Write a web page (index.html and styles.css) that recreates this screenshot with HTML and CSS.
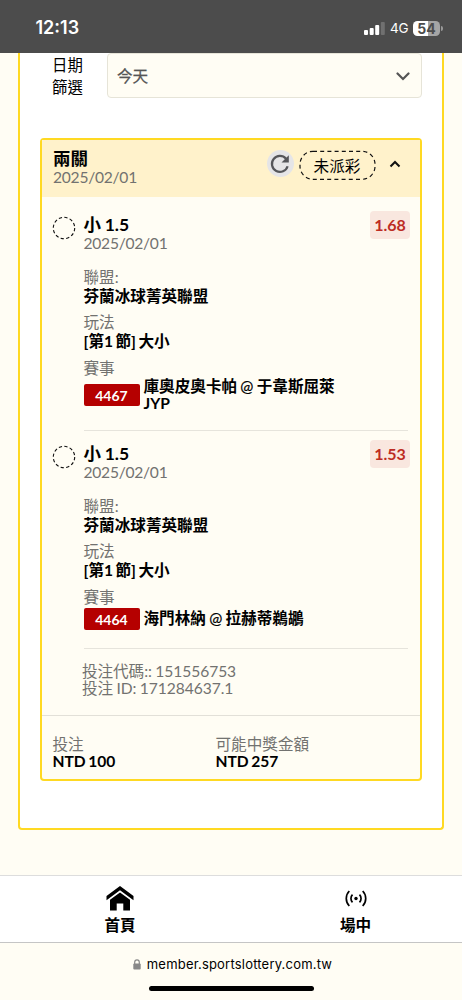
FILE: index.html
```html
<!DOCTYPE html>
<html lang="zh-Hant">
<head>
<meta charset="utf-8">
<title>投注紀錄</title>
<link rel="stylesheet" href="styles.css">
</head>
<body>
<div class="screen">
  <header class="status">
    <span class="clock">12:13</span>
    <div class="indicators">
      <svg class="signal" width="21" height="13" viewBox="0 0 21 13"><rect x="0" y="8" width="4" height="5" rx="1" fill="#fff"/><rect x="5.7" y="6" width="4" height="7" rx="1" fill="#fff"/><rect x="11.2" y="3" width="4" height="10" rx="1" fill="#fff"/><rect x="16.8" y="0" width="4" height="13" rx="1" fill="#707070"/></svg>
      <span class="network">4G</span>
      <div class="battery"><span class="level">54</span><i class="tip"></i></div>
    </div>
  </header>

  <main class="panel">
    <div class="filter">
      <div class="filter-label">日期<br>篩選</div>
      <div class="select"><span>今天</span>
        <svg width="14" height="9" viewBox="0 0 14 9"><path d="M1.5 1.5 7 7l5.500-5.500" fill="none" stroke="#555" stroke-width="2.200" stroke-linecap="round"/></svg>
      </div>
    </div>

    <section class="card">
      <div class="card-head">
        <div class="card-title"><div class="title">兩關</div><div class="date">2025/02/01</div></div>
        <div class="refresh"><svg width="20" height="20" viewBox="0 0 20 20"><path d="M16 4.700A8 8 0 1 0 17.600 12.200" fill="none" stroke="#55565a" stroke-width="2.200"/><path d="M18.800 1.200V8.500H11.500Z" fill="#55565a"/></svg></div>
        <div class="state"><svg class="state-ring" width="77" height="31" viewBox="0 0 77 31"><rect x="1" y="1.300" width="75" height="28" rx="13" fill="none" stroke="#111" stroke-width="1.200" stroke-dasharray="4 3.200"/></svg><span>未派彩</span></div>
        <svg class="caret" width="12" height="8" viewBox="0 0 12 8"><path d="M1.500 6.500 6 2l4.500 4.500" fill="none" stroke="#111" stroke-width="2"/></svg>
      </div>

      <article class="leg">
        <svg class="ring" width="24" height="24" viewBox="0 0 24 24"><circle cx="12" cy="12" r="10.700" fill="none" stroke="#111" stroke-width="1.100" stroke-dasharray="3.300 2.300"/></svg>
        <div class="leg-body">
          <div class="leg-top"><div><div class="title">小 1.5</div><div class="date">2025/02/01</div></div><span class="odds">1.68</span></div>
          <dl class="facts"><dt>聯盟:</dt><dd>芬蘭冰球菁英聯盟</dd><dt>玩法</dt><dd class="market">[第1 節] 大小</dd><dt>賽事</dt></dl>
          <div class="match tall"><span class="code">4467</span><span class="teams">庫奧皮奧卡帕 <i>@</i> 于韋斯屈萊<br>JYP</span></div>
        </div>
      </article>

      <article class="leg second">
        <svg class="ring" width="24" height="24" viewBox="0 0 24 24"><circle cx="12" cy="12" r="10.700" fill="none" stroke="#111" stroke-width="1.100" stroke-dasharray="3.300 2.300"/></svg>
        <div class="leg-body">
          <div class="leg-top"><div><div class="title">小 1.5</div><div class="date">2025/02/01</div></div><span class="odds">1.53</span></div>
          <dl class="facts"><dt>聯盟:</dt><dd>芬蘭冰球菁英聯盟</dd><dt>玩法</dt><dd class="market">[第1 節] 大小</dd><dt>賽事</dt></dl>
          <div class="match"><span class="code">4464</span><span class="teams">海門林納 <i>@</i> 拉赫蒂鵜鶘</span></div>
        </div>
      </article>

      <div class="ids"><div>投注代碼:: 151556753</div><div>投注 ID: 171284637.1</div></div>
      <div class="totals">
        <div class="stake"><div class="total-label">投注</div><div class="amount">NTD 100</div></div>
        <div><div class="total-label">可能中獎金額</div><div class="amount">NTD 257</div></div>
      </div>
    </section>
  </main>

  <nav class="tabs">
    <div class="tab home"><svg width="28" height="26" viewBox="0 0 28 26"><path d="M14 0 .500 10v4.200L14 4.200l13.500 10V10Z"/><path d="M14 6.500 4 13.700V24.500h6.700v-7h6.600v7H24V13.700Z"/></svg><span>首頁</span></div>
    <div class="tab live"><svg width="22" height="17" viewBox="0 0 22 17"><circle cx="11" cy="8.500" r="1.700"/><path d="M7.500 4.700a5.400 5.400 0 0 0 0 7.600M14.500 4.700a5.400 5.400 0 0 1 0 7.600M4.300 1a10.800 10.800 0 0 0 0 15M17.700 1a10.800 10.800 0 0 1 0 15" fill="none" stroke="#000" stroke-width="1.700"/></svg><span>場中</span></div>
  </nav>

  <footer class="browser">
    <div class="address"><svg width="8" height="11" viewBox="0 0 8 11"><path d="M1.700 5V3.200a2.300 2.300 0 0 1 4.600 0V5" fill="none" stroke="#888" stroke-width="1.200"/><rect x=".300" y="4.500" width="7.400" height="6" rx="1" fill="#888"/></svg><span>member.sportslottery.com.tw</span></div>
    <div class="grip"></div>
  </footer>
</div>
</body>
</html>
```
FILE: styles.css
```css
* { box-sizing: border-box; }
body { margin: 0; background: #fffdf4; color: #000; font: 15.6px/18px Lato, "Noto Sans CJK TC", sans-serif; }
.screen { width: 462px; height: 1000px; display: flex; flex-direction: column; overflow: hidden; }

.status { height: 53px; flex: none; background: #4c4c4c; color: #fff; display: flex; justify-content: space-between; align-items: flex-start; padding: 18px 19px 0 35.5px; font-family: Inter, sans-serif; }
.clock { font-size: 18px; line-height: 20px; font-weight: 600; letter-spacing: 0; }
.indicators { display: flex; align-items: center; padding-top: 2px; }
.signal { margin-right: 5px; }
.network { font-size: 13.5px; line-height: 16px; width: 19px; margin-right: 4px; letter-spacing: -.2px; }
.battery { display: flex; align-items: center; }
.level { width: 27px; height: 15px; border-radius: 4.5px; background: linear-gradient(90deg, #fff 54%, #a5a5a5 54%); color: #4c4c4c; font-size: 14px; line-height: 15px; font-weight: 700; text-align: center; }
.tip { width: 2px; height: 5px; margin-left: 1px; border-radius: 0 2px 2px 0; background: #999; }

.panel { flex: none; height: 777px; margin: 0 18px; border: 2px solid #ffd922; border-top: 0; border-radius: 0 0 4px 4px; background: #fff; padding: 0 20px; }
.filter { display: flex; height: 45px; }
.filter-label { width: 67px; padding: 1px 0 0 12px; font-size: 15.4px; line-height: 22px; }
.select { flex: 1; height: 45px; border: 1px solid #e6e4d8; border-radius: 4px; background: #fffdf4; color: #555; display: flex; align-items: center; justify-content: space-between; padding: 1px 11px 0 9px; -webkit-text-stroke: .25px #555; }

.card { height: 643px; margin-top: 40px; border: 2px solid #ffd922; border-radius: 4px; background: #fffdf4; }
.card-head { height: 57px; background: #fff2cb; display: flex; align-items: flex-start; padding: 10px 19px 0 11px; }
.card-title { flex: 1; }
.title { font-size: 17.5px; line-height: 18px; font-weight: 700; word-spacing: -.6px; }
.date { color: #727270; line-height: 18px; letter-spacing: -.25px; }
.refresh { width: 27px; height: 27px; border-radius: 50%; background: #e5e5e7; display: grid; place-items: center; margin-right: 5px; }
.state { display: grid; width: 77px; height: 31px; place-items: center; margin-right: 13.5px; }
.state > * { grid-area: 1 / 1; }
.caret { margin-top: 10px; }

.leg { display: flex; padding: 19px 10px 0 10.5px; height: 234px; }
.leg.second { height: 218px; padding-top: 14px; }
.ring { flex: none; margin: -.5px 8px 0 -1px; }
.leg-body { flex: 1; border-bottom: 1px solid #e6e4dc; margin-right: 2px; }
.leg-top { display: flex; justify-content: space-between; align-items: flex-start; height: 51.5px; margin-right: -2px; }
.odds { width: 40px; height: 28px; margin-top: -5px; border-radius: 4px; background: #f9e7df; color: #bd2c23; font-size: 16px; line-height: 28px; font-weight: 700; text-align: center; }
.facts { margin: 0; line-height: 19px; }
.facts dt { color: #727270; }
.facts dd { margin: 0 0 7.8px; font-weight: 700; }
.facts .market { word-spacing: -1.3px; }
.match { display: flex; align-items: center; height: 23px; font-weight: 700; line-height: 17px; }
.match.tall { height: 34px; }
.teams { word-spacing: -.5px; }
.teams i { font-style: normal; font-weight: 400; -webkit-text-stroke: .2px #000; }
.code { flex: none; width: 56px; height: 22px; margin-right: 4px; border-radius: 2px; background: #b50000; color: #fff; font-size: 14px; line-height: 23px; text-align: center; }

.ids { height: 67px; padding: 14px 0 0 40px; border-bottom: 1px solid #e2e0d8; color: #727270; line-height: 17px; letter-spacing: -.06px; word-spacing: -.5px; }
.totals { display: flex; padding: 20px 0 0 10.5px; line-height: 16.5px; }
.stake { width: 163px; }
.total-label { color: #727270; }
.amount { font-weight: 700; letter-spacing: -.1px; word-spacing: -.8px; }

.tabs { flex: none; height: 68px; margin-top: 45px; background: #fff; border-top: 1px solid #ddd; border-bottom: 1px solid #c5c5c5; display: grid; grid-template-columns: 240px 231px; font-weight: 700; }
.tab { display: flex; flex-direction: column; align-items: center; }
.home { padding-top: 10px; }
.live { padding-top: 14px; }
.tab span { margin-top: auto; margin-bottom: 8px; }

.browser { display: flex; flex-direction: column; align-items: center; padding-top: 13px; }
.address { display: flex; align-items: center; gap: 6px; padding-left: 3px; font: 13px/16px Inter, sans-serif; letter-spacing: .2px; }
.grip { width: 165px; height: 5px; margin-top: 14px; border-radius: 3px; background: #000; }
```
